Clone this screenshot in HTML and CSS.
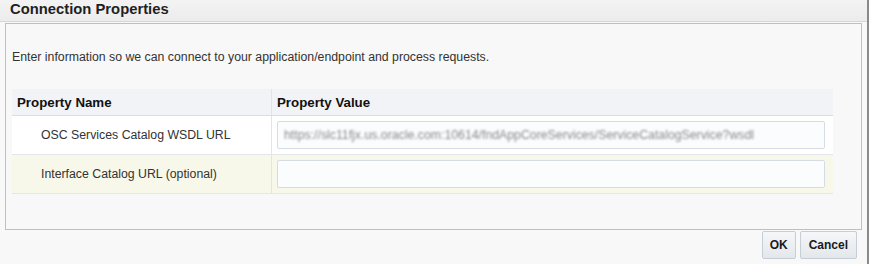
FILE: index.html
```html
<!DOCTYPE html>
<html>
<head>
<meta charset="utf-8">
<link rel="stylesheet" href="styles.css">
</head>
<body>
<div class="page">
  <div class="titlebar">Connection Properties</div>
  <div class="panel">
    <p class="intro">Enter information so we can connect to your application/endpoint and process requests.</p>
    <div class="table">
      <div class="row head">
        <div class="cell name">Property Name</div>
        <div class="cell value">Property Value</div>
      </div>
      <div class="row">
        <div class="cell name label">OSC Services Catalog WSDL URL</div>
        <div class="cell value"><div class="input"><span class="blurred">https://slc11fjx.us.oracle.com:10614/fndAppCoreServices/ServiceCatalogService?wsdl</span></div></div>
      </div>
      <div class="row alt">
        <div class="cell name label">Interface Catalog URL (optional)</div>
        <div class="cell value"><div class="input"></div></div>
      </div>
    </div>
  </div>
  <div class="actions">
    <button class="btn ok">OK</button>
    <button class="btn">Cancel</button>
  </div>
</div>
</body>
</html>
```
FILE: styles.css
```css
html, body {
  margin: 0;
  padding: 0;
  background: #f8f8f8;
}
body {
  font-family: "Liberation Sans", Arial, sans-serif;
  color: #333;
  width: 869px;
  height: 264px;
  overflow: hidden;
}
.page {
  width: 867px;
  height: 264px;
  border-right: 2px solid #8a8a8a;
}
.titlebar {
  height: 21px;
  border-bottom: 1px solid #d6d6d6;
  background: linear-gradient(#f3f3f3, #ececec);
  font-size: 14.8px;
  font-weight: bold;
  color: #1f1f1f;
  line-height: 18px;
  padding-left: 10px;
}
.panel {
  margin: 1px 0 0 5px;
  width: 823px;
  height: 180px;
  border: 1px solid #a9c1f0;
  background: #f8f8f8;
  padding: 25px 26px 0 6px;
}
.intro {
  margin: 0;
  font-size: 12.3px;
  line-height: 16px;
  color: #333;
}
.table {
  margin-top: 24px;
  width: 821px;
}
.row {
  display: flex;
  background: #fff;
  border-bottom: 1px solid #e3e6ea;
}
.row.head {
  background: #f1f3f7;
  height: 26px;
  border-bottom: 1px solid #d9dee6;
}
.row.alt {
  background: #f7f8ea;
}
.cell {
  display: flex;
  align-items: center;
}
.cell.name {
  width: 260px;
  border-right: 1px solid #e1e4ea;
  padding-left: 5px;
  box-sizing: border-box;
}
.row.head .cell {
  font-size: 13.3px;
  font-weight: bold;
  color: #111;
}
.cell.label {
  padding-left: 29px;
  font-size: 12.3px;
  color: #333;
}
.cell.value {
  flex: 1;
  padding: 5px 8px 5px 5px;
}
.row.head .cell.value {
  padding: 0 5px;
}
.input {
  width: 100%;
  height: 26px;
  border: 1px solid #d6dce4;
  border-radius: 2px;
  background: #fbfcfe;
  display: flex;
  align-items: center;
  padding-left: 6px;
  overflow: hidden;
}
.blurred {
  font-size: 12.3px;
  color: #8a8a8a;
  filter: blur(1.3px);
  white-space: nowrap;
}
.actions {
  display: flex;
  justify-content: flex-end;
  gap: 4px;
  padding: 1px 10px 0 0;
}
.btn {
  height: 28px;
  padding: 0 8px;
  font-family: "Liberation Sans", Arial, sans-serif;
  font-size: 12px;
  font-weight: bold;
  color: #1a1a1a;
  background: linear-gradient(#f5f7f9, #e3e7eb);
  border: 1px solid #c6cdd5;
  border-radius: 2px;
}
.btn.ok {
  padding: 0 7px;
}
```
